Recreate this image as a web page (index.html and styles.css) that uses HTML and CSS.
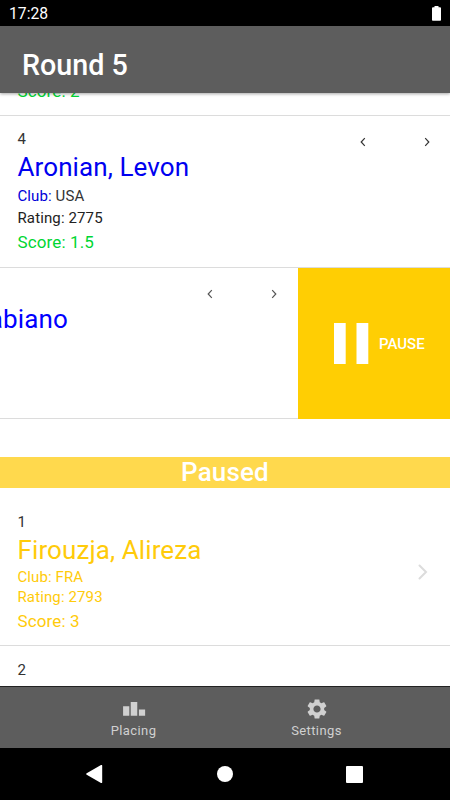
FILE: index.html
```
<!DOCTYPE html>
<html lang="en">
<head>
  <meta charset="UTF-8" />
  <meta name="viewport" content="width=device-width, initial-scale=1.0"/>
  <title>Round 5</title>
  <link rel="stylesheet" href="styles.css">
</head>
<body>
  <div class="status-bar">
    <span>17:28</span>
    <svg class="battery" width="9" height="15" viewBox="0 0 9 15"><path fill="#fff" d="M2.5 0h4v1.3H8a1 1 0 0 1 1 1V14a.8.8 0 0 1-.8.8H.8A.8.8 0 0 1 0 14V2.300a1 1 0 0 1 1-1h1.500z"/></svg>
  </div>

  <header class="header">
    <h1>Round 5</h1>
  </header>

  <main class="content">
    <div class="player player-cut">
      <p class="score">Score: 2</p>
    </div>

    <div class="player">
      <div class="info">
        <p class="place">4</p>
        <p class="name">Aronian, Levon</p>
        <p class="club"><span>Club:</span> USA</p>
        <p class="rating">Rating: 2775</p>
        <p class="score">Score: 1.5</p>
      </div>
      <div class="arrows">
        <svg width="6" height="10" viewBox="0 0 6 10"><path d="M4.800 1.200L1.200 5l3.600 3.800"/></svg>
        <svg width="6" height="10" viewBox="0 0 6 10"><path d="M1.200 1.200L4.800 5 1.200 8.800"/></svg>
      </div>
    </div>

    <div class="swipe-row">
      <div class="player swiped">
        <div class="info">
          <p class="place"></p>
          <p class="name">Caruana, Fabiano</p>
        </div>
        <div class="arrows">
          <svg width="6" height="10" viewBox="0 0 6 10"><path d="M4.800 1.200L1.200 5l3.600 3.800"/></svg>
          <svg width="6" height="10" viewBox="0 0 6 10"><path d="M1.200 1.200L4.800 5 1.200 8.800"/></svg>
        </div>
      </div>
      <button class="pause-button">
        <svg width="35" height="41" viewBox="0 0 35 41"><path fill="#fff" d="M0 0h11.700v41H0zM22.500 0h11.800v41H22.500z"/></svg>
        <span>PAUSE</span>
      </button>
    </div>

    <h2 class="divider">Paused</h2>

    <div class="player paused first">
      <div class="info">
        <p class="place">1</p>
        <p class="name">Firouzja, Alireza</p>
        <p class="club">Club: FRA</p>
        <p class="rating">Rating: 2793</p>
        <p class="score">Score: 3</p>
      </div>
      <svg class="detail" width="10" height="16" viewBox="0 0 10 16"><path d="M1.500 1.500L8 8l-6.500 6.500"/></svg>
    </div>

    <div class="player paused next">
      <p class="place">2</p>
    </div>
  </main>

  <nav class="tabs">
    <a class="tab">
      <svg width="22" height="22" viewBox="0 0 22 22"><path fill="#d0d0d0" d="M1 8.500h5.700v8.700H1zM8 4.600h6v12.600H8zM15.500 11.500h5.700v5.700h-5.700z"/></svg>
      <span>Placing</span>
    </a>
    <a class="tab">
      <svg width="24" height="24" viewBox="0 0 24 24"><path fill="#d0d0d0" d="M19.140 12.940c.040-.3.060-.610.060-.940 0-.320-.020-.640-.070-.940l2.030-1.580c.180-.140.230-.410.120-.610l-1.920-3.320c-.120-.220-.370-.290-.590-.220l-2.390.960c-.5-.380-1.030-.7-1.620-.940l-.360-2.540c-.040-.240-.240-.410-.480-.410h-3.840c-.240 0-.430.170-.470.410l-.360 2.540c-.590.240-1.130.570-1.620.940l-2.390-.960c-.220-.080-.470 0-.590.220L2.740 8.870c-.120.210-.080.470.120.610l2.030 1.580c-.050.3-.090.630-.090.940s.020.640.070.940l-2.030 1.580c-.180.140-.230.410-.120.610l1.920 3.320c.120.220.370.290.590.220l2.390-.960c.5.380 1.030.7 1.620.940l.360 2.540c.050.240.240.410.480.410h3.840c.240 0 .440-.170.470-.410l.360-2.540c.590-.240 1.130-.560 1.620-.940l2.390.960c.220.080.470 0 .590-.220l1.920-3.320c.120-.220.070-.470-.120-.610l-2.010-1.580zM12 15.600c-1.980 0-3.600-1.620-3.600-3.600s1.620-3.600 3.600-3.600 3.600 1.620 3.600 3.600-1.620 3.600-3.600 3.600z"/></svg>
      <span>Settings</span>
    </a>
  </nav>

  <div class="system-nav">
    <svg width="18" height="20" viewBox="0 0 18 20"><path fill="#fff" d="M.7 9.200L15 1a.8.8 0 0 1 1.200.7v16.600A.8.800 0 0 1 15 19L.7 10.800a.9.900 0 0 1 0-1.600z"/></svg>
    <span class="home"></span>
    <span class="recent"></span>
  </div>
</body>
</html>
```
FILE: styles.css
```
* {
  box-sizing: border-box;
}
body {
  font-family: Roboto, sans-serif;
  background: #ffffff;
  color: #333;
  margin: 0;
  height: 800px;
  display: flex;
  flex-direction: column;
  overflow: hidden;
}
h1, h2, p {
  margin: 0;
}
svg {
  display: block;
}
.status-bar {
  height: 26px;
  flex: none;
  padding: 0 9px 0 9px;
  display: flex;
  align-items: center;
  justify-content: space-between;
  background: #000;
  color: #fff;
  font-size: 15.7px;
  line-height: 26px;
}
.status-bar span {
  padding-top: 2px;
}
.header {
  height: 67px;
  flex: none;
  padding: 10px 22px 0;
  display: flex;
  align-items: center;
  background: #5d5d5d;
  color: #fff;
  box-shadow: 0 1px 3px rgba(0, 0, 0, 0.35);
  z-index: 1;
}
.header h1 {
  font-size: 28.7px;
  font-weight: 500;
}
.content {
  flex: 1;
  min-height: 0;
  display: flex;
  flex-direction: column;
  overflow: hidden;
}
.player {
  height: 152px;
  flex: none;
  padding: 13px 18px 0 17.5px;
  display: flex;
  justify-content: space-between;
  border-bottom: 1px solid #dcdcdc;
}
.player-cut {
  height: 23px;
  padding-top: 0;
  padding-bottom: 12px;
  align-items: flex-end;
}
.place {
  height: 20px;
  font-size: 15px;
  line-height: 20px;
}
.name {
  font-size: 26px;
  line-height: 36px;
  letter-spacing: 0.1px;
  color: #0000f0;
}
.club {
  font-size: 15px;
  line-height: 22px;
  letter-spacing: 0.1px;
}
.club span {
  color: #0000d8;
}
.rating {
  font-size: 15px;
  line-height: 23px;
  letter-spacing: 0.12px;
  color: #222;
}
.score {
  font-size: 17px;
  line-height: 24px;
  letter-spacing: 0.12px;
  color: #00d632;
}
.arrows {
  display: flex;
  gap: 58px;
  padding: 8px 2px 0 0;
}
.arrows path {
  fill: none;
  stroke: #333;
  stroke-width: 1.2;
}
.swipe-row {
  height: 151px;
  flex: none;
  display: flex;
}
.swiped {
  width: 450px;
  height: 151px;
  margin-left: -152px;
  padding-right: 19px;
}
.swiped .name {
  color: #0000ff;
}
.swiped .arrows path {
  stroke: #555;
}
.pause-button {
  width: 152px;
  flex: none;
  padding: 0 0 0 36px;
  display: flex;
  align-items: center;
  gap: 10px;
  border: none;
  background: #ffce03;
  color: #fff;
  font-family: inherit;
  font-size: 15px;
  font-weight: 500;
}
.divider {
  height: 31px;
  flex: none;
  margin-top: 38px;
  background: #ffd94d;
  color: #fff;
  font-size: 26px;
  font-weight: 500;
  line-height: 30px;
  letter-spacing: 0.15px;
  text-align: center;
}
.first {
  height: 158px;
  padding-top: 24px;
}
.next {
  padding-top: 14px;
}
.paused .name,
.paused .club,
.paused .rating,
.paused .score {
  color: #ffcb0a;
}
.paused .club {
  line-height: 18px;
}
.paused .rating {
  line-height: 22px;
}
.paused .score {
  line-height: 26px;
}
.detail {
  margin: 52px 4px 0 0;
}
.detail path {
  fill: none;
  stroke: #dcdcdc;
  stroke-width: 2;
  stroke-linecap: round;
}
.tabs {
  height: 62px;
  flex: none;
  padding: 0 42px;
  display: flex;
  background: #5d5d5d;
  border-top: 1px solid #222;
}
.tab {
  flex: 1;
  display: flex;
  flex-direction: column;
  align-items: center;
  color: #d0d0d0;
  font-size: 13px;
  line-height: 18px;
  letter-spacing: 0.4px;
}
.tab svg {
  width: 24px;
  height: 24px;
  margin: 10px 0 1px;
}
.system-nav {
  height: 52px;
  flex: none;
  padding: 0 87px 0 86px;
  display: flex;
  align-items: center;
  justify-content: space-between;
  background: #000;
}
.home {
  width: 16px;
  height: 16px;
  border-radius: 50%;
  background: #fff;
}
.recent {
  width: 17px;
  height: 17px;
  border-radius: 1px;
  background: #fff;
}
```
